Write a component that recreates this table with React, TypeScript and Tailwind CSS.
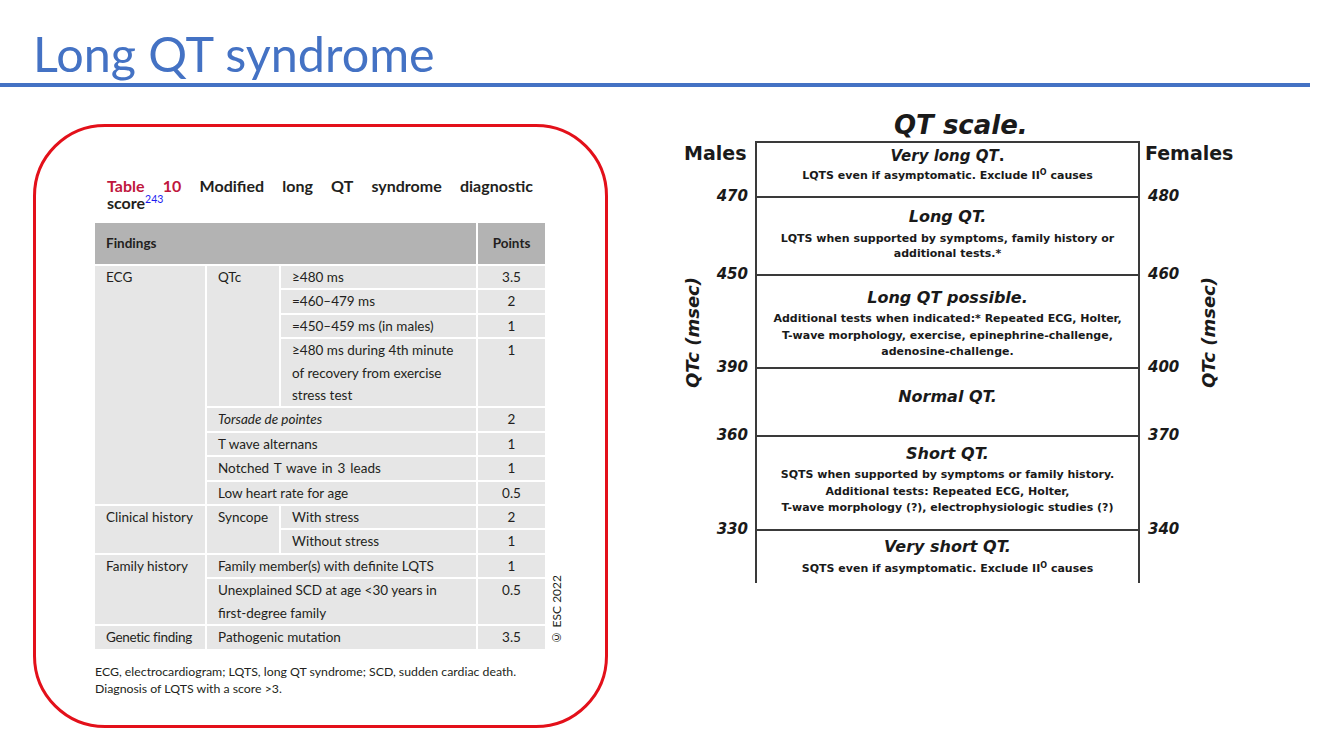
import React from "react";

const cell = "bg-[#e6e6e6] pl-[11px] pr-[4px] leading-[22.4px]";
const pts = "bg-[#e6e6e6] text-center leading-[22.4px]";

function ScoreTable() {
  return (
    <div className="grid grid-cols-[110px_72px_195px_67px] auto-rows-[minmax(22.4px,auto)] gap-[2px] w-[450px] text-[13.5px] text-[#231f20] font-['Lato',sans-serif]">
      <div className="col-start-1 col-span-3 row-start-1 bg-[#b3b3b3] h-[41px] flex items-center pl-[11px] font-bold">Findings</div>
      <div className="col-start-4 row-start-1 bg-[#b3b3b3] h-[41px] flex items-center justify-center font-bold">Points</div>

      <div className={`${cell} col-start-1 row-start-2 row-span-8`}>ECG</div>
      <div className={`${cell} col-start-2 row-start-2 row-span-4`}>QTc</div>
      <div className={`${cell} col-start-3 row-start-2`}>≥480 ms</div>
      <div className={`${pts} col-start-4 row-start-2`}>3.5</div>
      <div className={`${cell} col-start-3 row-start-3`}>=460–479 ms</div>
      <div className={`${pts} col-start-4 row-start-3`}>2</div>
      <div className={`${cell} col-start-3 row-start-4`}>=450–459 ms (in males)</div>
      <div className={`${pts} col-start-4 row-start-4`}>1</div>
      <div className={`${cell} col-start-3 row-start-5`}>
        ≥480 ms during 4th minute
        <br />
        of recovery from exercise
        <br />
        stress test
      </div>
      <div className={`${pts} col-start-4 row-start-5`}>1</div>

      <div className={`${cell} col-start-2 col-span-2 row-start-6 italic`}>Torsade de pointes</div>
      <div className={`${pts} col-start-4 row-start-6`}>2</div>
      <div className={`${cell} col-start-2 col-span-2 row-start-7`}>T wave alternans</div>
      <div className={`${pts} col-start-4 row-start-7`}>1</div>
      <div className={`${cell} col-start-2 col-span-2 row-start-8 [word-spacing:1.5px]`}>Notched T wave in 3 leads</div>
      <div className={`${pts} col-start-4 row-start-8`}>1</div>
      <div className={`${cell} col-start-2 col-span-2 row-start-9`}>Low heart rate for age</div>
      <div className={`${pts} col-start-4 row-start-9`}>0.5</div>

      <div className={`${cell} col-start-1 row-start-10 row-span-2`}>Clinical history</div>
      <div className={`${cell} col-start-2 row-start-10 row-span-2`}>Syncope</div>
      <div className={`${cell} col-start-3 row-start-10`}>With stress</div>
      <div className={`${pts} col-start-4 row-start-10`}>2</div>
      <div className={`${cell} col-start-3 row-start-11`}>Without stress</div>
      <div className={`${pts} col-start-4 row-start-11`}>1</div>

      <div className={`${cell} col-start-1 row-start-12 row-span-2`}>Family history</div>
      <div className={`${cell} col-start-2 col-span-2 row-start-12`}>Family member(s) with definite LQTS</div>
      <div className={`${pts} col-start-4 row-start-12`}>1</div>
      <div className={`${cell} col-start-2 col-span-2 row-start-13`}>
        Unexplained SCD at age &lt;30 years in
        <br />
        first-degree family
      </div>
      <div className={`${pts} col-start-4 row-start-13`}>0.5</div>

      <div className={`${cell} col-start-1 row-start-14 tracking-[-0.3px]`}>Genetic finding</div>
      <div className={`${cell} col-start-2 col-span-2 row-start-14`}>Pathogenic mutation</div>
      <div className={`${pts} col-start-4 row-start-14`}>3.5</div>
    </div>
  );
}

function Card() {
  return (
    <div className="mt-[14px] w-[575px] h-[604px] shrink-0 border-[3px] border-[#e3101a] rounded-[72px] pl-[59px] pt-[50px] font-['Lato',sans-serif] text-[#231f20]">
      <div className="pl-[12px] w-[438px] text-[16px] leading-[17px] font-bold">
        <div className="flex justify-between">
          <span className="text-[#c0173e]">Table</span>
          <span className="text-[#c0173e]">10</span>
          <span>Modified</span>
          <span>long</span>
          <span>QT</span>
          <span>syndrome</span>
          <span>diagnostic</span>
        </div>
        <div>
          score
          <span className="relative -top-[6px] text-[10.5px] font-normal text-[#1d1df0]">243</span>
        </div>
      </div>
      <div className="mt-[9px] flex items-end">
        <ScoreTable />
        <div className="ml-[5px] mb-[3px] [writing-mode:vertical-rl] rotate-180 text-[12px] leading-[14px] text-[#231f20]">
          © ESC 2022
        </div>
      </div>
      <div className="mt-[14px] text-[12.3px] leading-[17.5px]">
        ECG, electrocardiogram; LQTS, long QT syndrome; SCD, sudden cardiac death.
        <br />
        Diagnosis of LQTS with a score &gt;3.
      </div>
    </div>
  );
}

function Num({ v, side }: { v: string; side: "l" | "r" }) {
  return (
    <div
      className={`-translate-y-1/2 text-[15px] leading-[18px] font-bold italic ${
        side === "l" ? "text-right pr-[7px]" : "text-left pl-[8px]"
      }`}
    >
      {v}
    </div>
  );
}

function Deg() {
  return <span className="relative -top-[4px] text-[8px] leading-none">O</span>;
}

function QTScale() {
  const mid = "col-start-2 border-l-2 border-r-2 border-t-2 border-[#3a3a3a] flex flex-col items-center text-center";
  const sub = "text-[11px] font-bold";
  const ttl = "text-[16px] font-bold italic";
  return (
    <div className="ml-[64px] w-[563px] font-['DejaVu_Sans',sans-serif] text-[#1a1a1a]">
      <div className="h-[31px] pl-[222px] text-[26px] leading-[31px] font-bold italic">QT scale.</div>
      <div className="grid grid-cols-[83px_385px_95px] grid-rows-[55px_78px_93px_68px_94px_54px]">
        {/* left column */}
        <div className="col-start-1 row-start-1 pl-[12px] pt-[1px] text-[19px] leading-[22px] font-bold">Males</div>
        <div className="col-start-1 row-start-2"><Num v="470" side="l" /></div>
        <div className="col-start-1 row-start-3"><Num v="450" side="l" /></div>
        <div className="col-start-1 row-start-4"><Num v="390" side="l" /></div>
        <div className="col-start-1 row-start-5"><Num v="360" side="l" /></div>
        <div className="col-start-1 row-start-6"><Num v="330" side="l" /></div>
        <div className="col-start-1 row-start-3 row-span-2 self-start justify-self-start ml-[11px] mt-[3px] [writing-mode:vertical-rl] rotate-180 text-[18px] leading-[20px] font-bold italic">
          QTc (msec)
        </div>

        {/* center */}
        <div className={`${mid} row-start-1 pt-[4px]`}>
          <div className="text-[15px] leading-[18px] font-bold">
            <span className="italic">Very long QT</span>.
          </div>
          <div className={`${sub} mt-[3px] leading-[15px]`}>
            LQTS even if asymptomatic. Exclude II<Deg /> causes
          </div>
        </div>
        <div className={`${mid} row-start-2 pt-[9px]`}>
          <div className={`${ttl} leading-[20px]`}>Long QT.</div>
          <div className={`${sub} mt-[4px] leading-[15px]`}>
            LQTS when supported by symptoms, family history or
            <br />
            additional tests.*
          </div>
        </div>
        <div className={`${mid} row-start-3 pt-[12px]`}>
          <div className={`${ttl} leading-[20px]`}>Long QT possible.</div>
          <div className={`${sub} mt-[3px] leading-[16.5px]`}>
            Additional tests when indicated:* Repeated ECG, Holter,
            <br />
            T-wave morphology, exercise, epinephrine-challenge,
            <br />
            adenosine-challenge.
          </div>
        </div>
        <div className={`${mid} row-start-4 pt-[18px]`}>
          <div className={`${ttl} leading-[20px]`}>Normal QT.</div>
        </div>
        <div className={`${mid} row-start-5 pt-[7px]`}>
          <div className={`${ttl} leading-[20px]`}>Short QT.</div>
          <div className={`${sub} mt-[3px] leading-[16.5px]`}>
            SQTS when supported by symptoms or family history.
            <br />
            Additional tests: Repeated ECG, Holter,
            <br />
            T-wave morphology (?), electrophysiologic studies (?)
          </div>
        </div>
        <div className={`${mid} row-start-6 pt-[6px]`}>
          <div className={`${ttl} leading-[20px]`}>Very short QT.</div>
          <div className={`${sub} mt-[4px] leading-[15px]`}>
            SQTS even if asymptomatic. Exclude II<Deg /> causes
          </div>
        </div>

        {/* right column */}
        <div className="col-start-3 row-start-1 pl-[5px] pt-[1px] text-[19px] leading-[22px] font-bold">Females</div>
        <div className="col-start-3 row-start-2"><Num v="480" side="r" /></div>
        <div className="col-start-3 row-start-3"><Num v="460" side="r" /></div>
        <div className="col-start-3 row-start-4"><Num v="400" side="r" /></div>
        <div className="col-start-3 row-start-5"><Num v="370" side="r" /></div>
        <div className="col-start-3 row-start-6"><Num v="340" side="r" /></div>
        <div className="col-start-3 row-start-3 row-span-2 self-start justify-self-start ml-[59px] mt-[3px] [writing-mode:vertical-rl] rotate-180 text-[18px] leading-[20px] font-bold italic">
          QTc (msec)
        </div>
      </div>
    </div>
  );
}

export default function App() {
  return (
    <div className="w-[1334px] h-[750px] bg-white overflow-hidden">
      <div className="pl-[33px] pt-[30px]">
        <h1 className="text-[48.5px] leading-[47px] text-[#4472c4] font-['Lato',sans-serif]">Long QT syndrome</h1>
      </div>
      <div className="mt-[6px] h-[4px] w-[1310px] bg-[#4472c4]" />
      <div className="flex items-start pl-[33px] pt-[23px]">
        <Card />
        <QTScale />
      </div>
    </div>
  );
}
